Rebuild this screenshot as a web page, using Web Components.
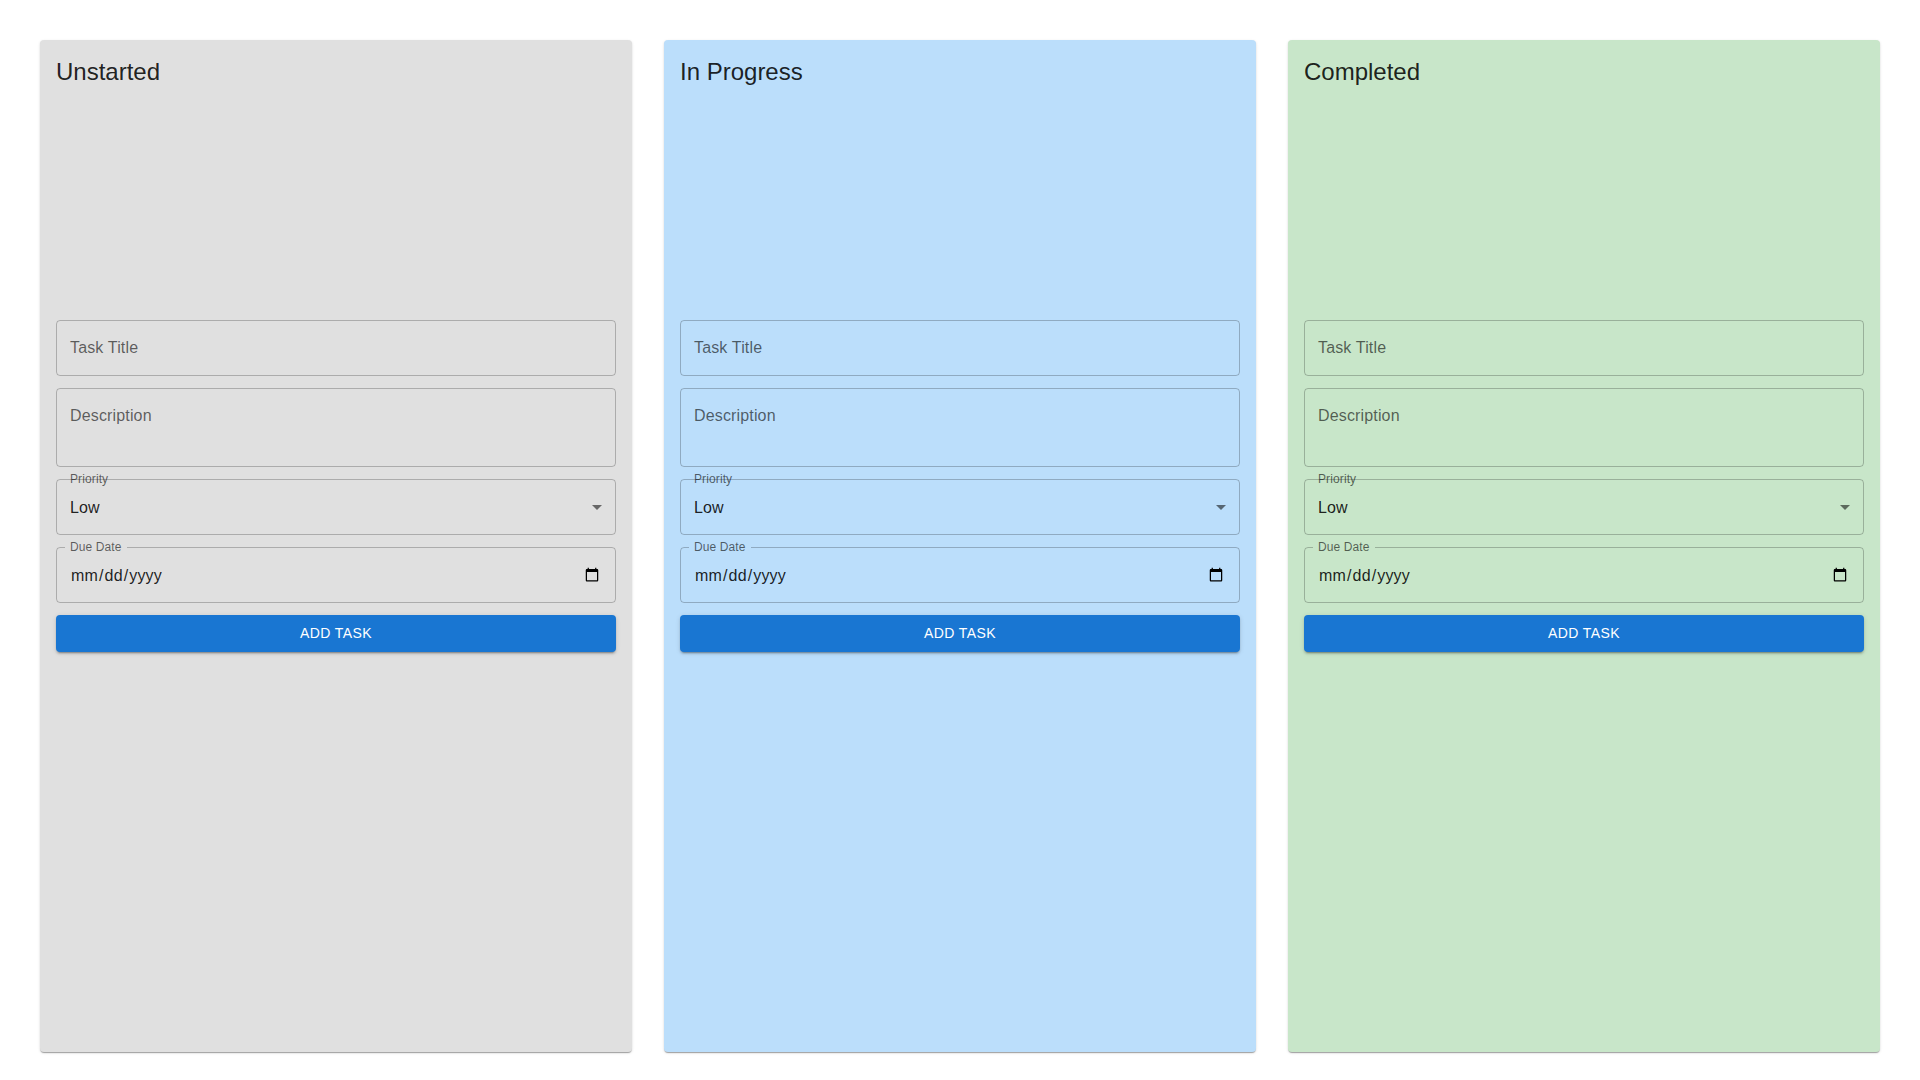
<!DOCTYPE html>
<html lang="en">
<head>
<meta charset="utf-8">
<title>Task Board</title>
<style>
  html, body { margin: 0; background: #fff; }
  body {
    font-family: "Liberation Sans", Arial, sans-serif;
    color: rgba(0, 0, 0, 0.87);
  }
</style>
</head>
<body>
<task-board>
  <task-column title="Unstarted" color="#e0e0e0"></task-column>
  <task-column title="In Progress" color="#bbdefb"></task-column>
  <task-column title="Completed" color="#c8e6c9"></task-column>
</task-board>

<script>
class TaskBoard extends HTMLElement {
  constructor() {
    super();
    const shadow = this.attachShadow({ mode: "open" });
    shadow.innerHTML = /*html*/ `
      <style>
        :host {
          display: grid;
          grid-template-columns: repeat(3, 1fr);
          gap: 32px;
          padding: 40px 40px 28px;
          height: 1080px;
          box-sizing: border-box;
        }
      </style>
      <slot></slot>
    `;
  }
}

class OutlinedField extends HTMLElement {
  constructor() {
    super();
    const shadow = this.attachShadow({ mode: "open" });
    shadow.innerHTML = /*html*/ `
      <style>
        :host {
          display: block;
          position: relative;
          box-sizing: border-box;
          height: 56px;
          border: 1px solid rgba(0, 0, 0, 0.23);
          border-radius: 4px;
          font-size: 16px;
          line-height: 23px;
          letter-spacing: 0.15px;
          padding: 15.5px 13px;
        }
        :host([rows="2"]) { height: 79px; }
        .label { display: block; margin-top: -0.5px; color: rgba(0, 0, 0, 0.6); }
        :host([shrink]) .label {
          position: absolute;
          left: 13px;
          top: -9px;
          margin-top: 0;
          font-size: 12px;
          line-height: 17.25px;
          letter-spacing: 0.11px;
        }
        /* the outline is cut behind the label only when "notch" is set */
        :host([notch]) .label {
          padding: 0 5px;
          margin-left: -5px;
          background: var(--field-bg);
        }
      </style>
      <span class="label"></span>
      <slot></slot>
    `;
    shadow.querySelector(".label").textContent = this.getAttribute("label");
  }
}

class SelectValue extends HTMLElement {
  constructor() {
    super();
    const shadow = this.attachShadow({ mode: "open" });
    shadow.innerHTML = /*html*/ `
      <style>
        :host { display: flex; align-items: center; justify-content: space-between; height: 23px; }
        svg { width: 24px; height: 24px; margin-right: -7px; fill: rgba(0, 0, 0, 0.54); flex: none; }
      </style>
      <slot></slot>
      <svg viewBox="0 0 24 24"><path d="M7 10l5 5 5-5z"></path></svg>
    `;
  }
}

class DateValue extends HTMLElement {
  constructor() {
    super();
    const shadow = this.attachShadow({ mode: "open" });
    shadow.innerHTML = /*html*/ `
      <style>
        :host { display: block; }
        input {
          display: block;
          width: 100%;
          box-sizing: border-box;
          height: 23px;
          border: 0;
          padding: 0;
          margin: 0;
          background: none;
          outline: 0;
          font: inherit;
          letter-spacing: inherit;
          color: rgba(0, 0, 0, 0.87);
        }
      </style>
      <input type="date">
    `;
  }
}

class AddButton extends HTMLElement {
  constructor() {
    super();
    const shadow = this.attachShadow({ mode: "open" });
    shadow.innerHTML = /*html*/ `
      <style>
        :host { display: block; }
        button {
          display: block;
          width: 100%;
          height: 37px;
          border: 0;
          border-radius: 4px;
          padding: 0 16px;
          background: #1976d2;
          color: #fff;
          font: 400 14px/24.5px "Liberation Sans", Arial, sans-serif;
          letter-spacing: 0.4px;
          text-transform: uppercase;
          box-shadow: 0 3px 1px -2px rgba(0,0,0,.2), 0 2px 2px 0 rgba(0,0,0,.14), 0 1px 5px 0 rgba(0,0,0,.12);
        }
      </style>
      <button type="button"><slot></slot></button>
    `;
  }
}

class TaskForm extends HTMLElement {
  constructor() {
    super();
    const shadow = this.attachShadow({ mode: "open" });
    shadow.innerHTML = /*html*/ `
      <style>
        :host { display: flex; flex-direction: column; gap: 12px; }
      </style>
      <outlined-field label="Task Title"></outlined-field>
      <outlined-field label="Description" rows="2"></outlined-field>
      <outlined-field label="Priority" shrink>
        <select-value>Low</select-value>
      </outlined-field>
      <outlined-field label="Due Date" shrink notch>
        <date-value></date-value>
      </outlined-field>
      <add-button>Add Task</add-button>
    `;
  }
}

class TaskColumn extends HTMLElement {
  constructor() {
    super();
    const shadow = this.attachShadow({ mode: "open" });
    shadow.innerHTML = /*html*/ `
      <style>
        :host {
          display: block;
          padding: 16px;
          border-radius: 4px;
          box-shadow: 0 2px 1px -1px rgba(0,0,0,.2), 0 1px 1px 0 rgba(0,0,0,.14), 0 1px 3px 0 rgba(0,0,0,.12);
        }
        h2 {
          margin: 0 0 232px;
          font-size: 24px;
          font-weight: 400;
          line-height: 32px;
        }
      </style>
      <h2></h2>
      <task-form></task-form>
    `;
    const color = this.getAttribute("color");
    this.style.background = color;
    this.style.setProperty("--field-bg", color);
    shadow.querySelector("h2").textContent = this.getAttribute("title");
  }
}

customElements.define("outlined-field", OutlinedField);
customElements.define("select-value", SelectValue);
customElements.define("date-value", DateValue);
customElements.define("add-button", AddButton);
customElements.define("task-form", TaskForm);
customElements.define("task-column", TaskColumn);
customElements.define("task-board", TaskBoard);
</script>
</body>
</html>
